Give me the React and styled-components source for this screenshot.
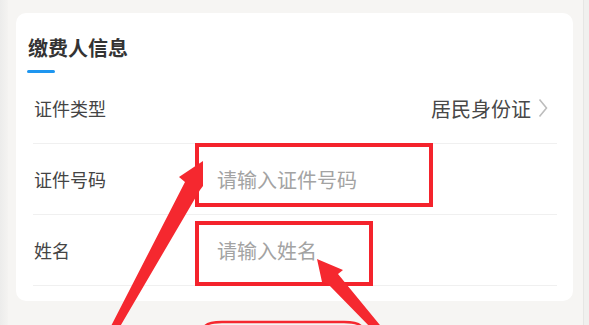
import React from 'react'
import styled, { createGlobalStyle } from 'styled-components'

const GlobalStyle = createGlobalStyle`
  html, body {
    margin: 0;
    padding: 0;
    background: #f6f5f3;
  }
  * { box-sizing: border-box; }
`

const rows = [
  { label: '证件类型', value: '居民身份证', select: true },
  { label: '证件号码', placeholder: '请输入证件号码' },
  { label: '姓名', placeholder: '请输入姓名' },
]

const marks = [
  { left: 195, top: 143, width: 238, height: 64 },
  { left: 195, top: 221, width: 178, height: 65 },
]

const App = () => {
  return (
    <>
      <GlobalStyle />
      <Page>
        <LeftEdge />
        <Main>
          <Card>
            <Header>
              <Title>缴费人信息</Title>
              <Accent />
            </Header>
            <Rows>
              {rows.map((row) => (
                <Row key={row.label}>
                  <Label>{row.label}</Label>
                  {row.select ? (
                    <Select>
                      <Value>{row.value}</Value>
                      <Chevron viewBox="0 0 10 20">
                        <path d="M1.5 1.5 L8.5 10 L1.5 18.5" />
                      </Chevron>
                    </Select>
                  ) : (
                    <Input placeholder={row.placeholder} />
                  )}
                </Row>
              ))}
            </Rows>
          </Card>
        </Main>
        <Scrollbar />

        {marks.map((m, i) => (
          <Mark key={i} style={{ left: m.left, top: m.top, width: m.width, height: m.height }} />
        ))}
        <Arrows viewBox="0 0 589 325">
          <polygon points="203,161 203,186 200,190 118,330 109,330 185,182 179,177" />
          <polygon points="317,259 343,270 338,274 384,330 373,330 328,284 322,282" />
          <path d="M203 330 Q204 322 222 322 L344 322 Q362 322 363 330" fill="none" stroke="#f5282f" strokeWidth="2.4" />
        </Arrows>
      </Page>
    </>
  )
}

export default App

const Page = styled.div`
  position: relative;
  display: flex;
  width: 589px;
  height: 325px;
  overflow: hidden;
  background: #f6f5f3;
  font-family: "Noto Sans CJK SC", "Noto Sans", sans-serif;
`

const LeftEdge = styled.div`
  width: 8px;
  background: linear-gradient(to right, #ececeb, #f4f3f1);
`

const Main = styled.div`
  flex: 1;
  padding: 13px 10px 0 8px;
`

const Scrollbar = styled.div`
  width: 6px;
  background: #f0f0ee;
  border-left: 1px solid #e6e6e4;
`

const Card = styled.div`
  background: #ffffff;
  border-radius: 10px;
  padding: 0 16px 15px 12px;
`

const Header = styled.div`
  padding-top: 21px;
`

const Title = styled.div`
  font-size: 20px;
  line-height: 28px;
  font-weight: 700;
  color: #333333;
`

const Accent = styled.div`
  width: 28px;
  height: 3px;
  border-radius: 2px;
  margin: 8px 0 0 -1px;
  background: #1e96f0;
`

const Rows = styled.div`
  margin-left: 5px;
`

const Row = styled.div`
  display: flex;
  align-items: center;
  height: 71px;
  border-bottom: 1px solid #f0f0f0;
`

const Label = styled.div`
  width: 184px;
  padding-left: 1px;
  font-size: 18px;
  color: #444444;
`

const Select = styled.div`
  flex: 1;
  display: flex;
  justify-content: flex-end;
  align-items: center;
  gap: 7px;
  padding-right: 9px;
`

const Value = styled.span`
  font-size: 20px;
  color: #484848;
`

const Chevron = styled.svg`
  width: 10px;
  height: 20px;
  fill: none;
  stroke: #bdbdbd;
  stroke-width: 1.6;
`

const Input = styled.input`
  flex: 1;
  border: none;
  outline: none;
  background: transparent;
  padding: 0;
  font-family: inherit;
  font-size: 20px;
  color: #333333;

  &::placeholder {
    color: #a3a3a3;
  }
`

const Mark = styled.div`
  position: absolute;
  border: 4px solid #f4232c;
`

const Arrows = styled.svg`
  position: absolute;
  left: 0;
  top: 0;
  width: 589px;
  height: 325px;
  fill: #f5282f;
  pointer-events: none;
`
